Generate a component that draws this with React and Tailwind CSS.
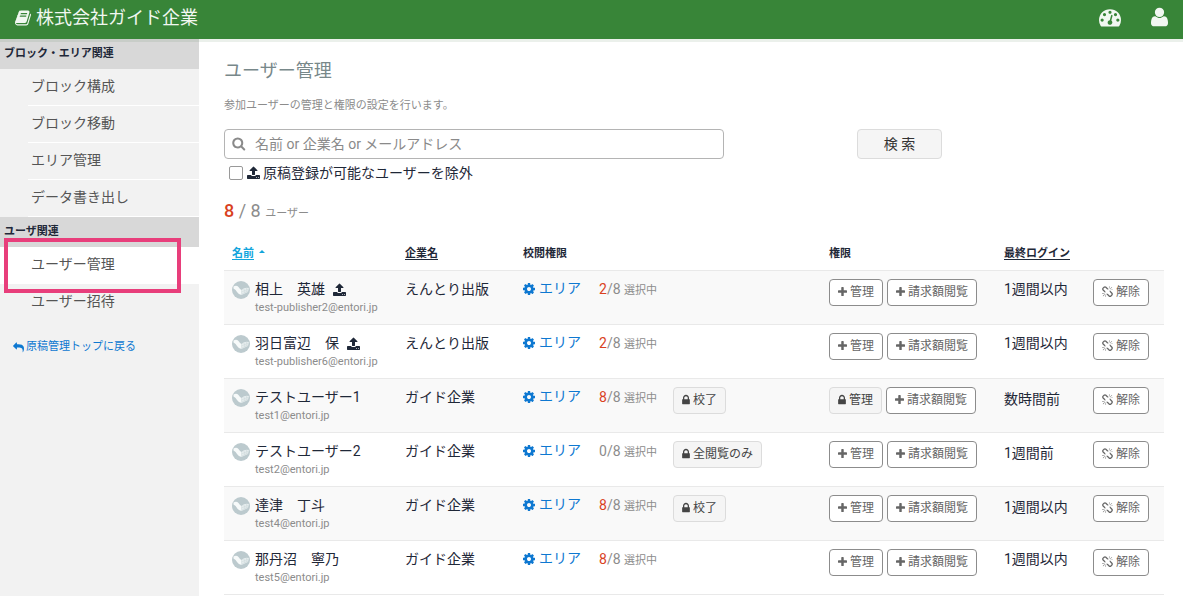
import React from "react";

const ICONS = {
  book: {
    box: "64 0 1664 1792",
    d: "M1703 478q40 57 18 129l-275 906q-19 64-76.5 107.5t-122.5 43.5h-923q-77 0-148.5-53.5t-99.5-131.5q-24-67-2-127 0-4 3-27t4-37q1-8-3-21.5t-3-19.5q2-11 8-21t16.5-23.5 16.5-23.5q23-38 45-91.5t30-91.5q3-10 .5-30t-.5-28q3-11 17-28t17-23q21-36 42-92t25-90q1-9-2.5-32t.5-28q4-13 22-30.5t22-22.5q19-26 42.5-84.5t27.5-96.5q1-8-3-25.5t-2-26.5q2-8 9-18t18-23 17-21q8-12 16.5-30.5t15-35 16-36 19.5-32 26.5-23.5 36-11.5 47.5 5.5l-1 3q38-9 51-9h761q74 0 114 56t18 130l-274 906q-36 119-71.5 153.5t-128.5 34.5h-869q-27 0-38 15-11 16-1 43 24 70 144 70h923q29 0 56-15.5t35-41.5l300-987q7-22 5-57 38 15 59 43zm-1064 2q-4 13 2 22.5t20 9.5h608q13 0 25.5-9.5t16.5-22.5l21-64q4-13-2-22.5t-20-9.5h-608q-13 0-25.5 9.5t-16.5 22.5zm-83 256q-4 13 2 22.5t20 9.5h608q13 0 25.5-9.5t16.5-22.5l21-64q4-13-2-22.5t-20-9.5h-608q-13 0-25.5 9.5t-16.5 22.5z",
  },
  gauge: {
    box: "0 0 1792 1792",
    d: "M384 1152q0-53-37.5-90.5t-90.5-37.5-90.5 37.5-37.5 90.5 37.5 90.5 90.5 37.5 90.5-37.5 37.5-90.5zm192-448q0-53-37.5-90.5t-90.5-37.5-90.5 37.5-37.5 90.5 37.5 90.5 90.5 37.5 90.5-37.5 37.5-90.5zm428 481l101-382q6-26-7.5-48.5t-38.5-29.5-48 6.5-30 39.5l-101 382q-60 5-107 43.5t-63 98.5q-20 77 20 146t117 89 146-20 89-117q16-60-6-117t-72-91zm660-33q0-53-37.5-90.5t-90.5-37.5-90.5 37.5-37.5 90.5 37.5 90.5 90.5 37.5 90.5-37.5 37.5-90.5zm-640-640q0-53-37.5-90.5t-90.5-37.5-90.5 37.5-37.5 90.5 37.5 90.5 90.5 37.5 90.5-37.5 37.5-90.5zm448 192q0-53-37.5-90.5t-90.5-37.5-90.5 37.5-37.5 90.5 37.5 90.5 90.5 37.5 90.5-37.5 37.5-90.5zm320 448q0 261-141 483-19 29-54 29h-1402q-35 0-54-29-141-221-141-483 0-182 71-348t191-286 286-191 348-71 348 71 286 191 191 286 71 348z",
  },
  user: {
    box: "192 0 1408 1792",
    d: "M1600 1405q0 120-73 189.5t-194 69.5h-874q-121 0-194-69.5t-73-189.5q0-53 3.5-103.5t14-109 26.5-108.5 43-97.5 62-81 85.5-53.5 111.5-20q9 0 42 21.5t74.5 48 108 48 133.5 21.5 133.5-21.5 108-48 74.5-48 42-21.5q61 0 111.5 20t85.5 53.5 62 81 43 97.5 26.5 108.5 14 109 3.5 103.5zm-320-893q0 159-112.5 271.5t-271.5 112.5-271.5-112.5-112.5-271.5 112.5-271.5 271.5-112.5 271.5 112.5 112.5 271.5z",
  },
  reply: {
    box: "0 0 1792 1792",
    d: "M1792 1120q0 166-127 451-3 7-10.5 24t-13.5 30-13 22q-12 17-28 17-15 0-23.5-10t-8.5-25q0-9 2.5-26.5t2.5-23.5q5-68 5-123 0-101-17.5-181t-48.5-138.5-80-101-105.5-69.5-133-42.5-154-21.5-175.5-6h-224v256q0 26-19 45t-45 19-45-19l-512-512q-19-19-19-45t19-45l512-512q19-19 45-19t45 19 19 45v256h224q713 0 875 403 53 134 53 333z",
  },
  search: {
    box: "64 64 1728 1792",
    d: "M1216 832q0-185-131.5-316.5t-316.5-131.5-316.5 131.5-131.5 316.5 131.5 316.5 316.5 131.5 316.5-131.5 131.5-316.5zm512 832q0 52-38 90t-90 38q-54 0-90-38l-343-342q-179 124-399 124-143 0-273.5-55.5t-225-150-150-225-55.5-273.5 55.5-273.5 150-225 225-150 273.5-55.5 273.5 55.5 225 150 150 225 55.5 273.5q0 220-124 399l343 343q37 37 37 90z",
  },
  upload: {
    box: "64 0 1664 1792",
    d: "M1344 1472q0-26-19-45t-45-19-45 19-19 45 19 45 45 19 45-19 19-45zm256 0q0-26-19-45t-45-19-45 19-19 45 19 45 45 19 45-19 19-45zm128-224v320q0 40-28 68t-68 28h-1472q-40 0-68-28t-28-68v-320q0-40 28-68t68-28h427q21 56 70.5 92t110.5 36h256q61 0 110.5-36t70.5-92h427q40 0 68 28t28 68zm-325-648q-17 40-59 40h-256v448q0 26-19 45t-45 19h-256q-26 0-45-19t-19-45v-448h-256q-42 0-59-40-17-39 14-69l448-448q18-19 45-19t45 19l448 448q31 30 14 69z",
  },
  cog: {
    box: "128 0 1536 1792",
    d: "M1152 896q0-106-75-181t-181-75-181 75-75 181 75 181 181 75 181-75 75-181zm512-109v222q0 12-8 23t-20 13l-185 28q-19 54-39 91 35 50 107 138 10 12 10 25t-9 23q-27 37-99 108t-94 71q-12 0-26-9l-138-108q-44 23-91 38-16 136-29 186-7 28-36 28h-222q-14 0-24.5-8.5t-11.5-21.5l-28-184q-49-16-90-37l-141 107q-10 9-25 9-14 0-25-11-126-114-165-168-7-10-7-23 0-12 8-23 15-21 51-66.5t54-70.5q-27-50-41-99l-183-27q-13-2-21-12.5t-8-23.5v-222q0-12 8-23t19-13l186-28q14-46 39-92-40-57-107-138-10-12-10-24 0-10 9-23 26-36 98.5-107.5t94.5-71.5q13 0 26 10l138 107q44-23 91-38 16-136 29-186 7-28 36-28h222q14 0 24.5 8.5t11.5 21.5l28 184q49 16 90 37l142-107q9-9 24-9 13 0 25 10 129 119 165 170 7 8 7 22 0 12-8 23-15 21-51 66.5t-54 70.5q26 50 41 98l183 28q13 2 21 12.5t8 23.5z",
  },
  plus: {
    box: "192 0 1408 1792",
    d: "M1600 736v192q0 40-28 68t-68 28h-416v416q0 40-28 68t-68 28h-192q-40 0-68-28t-28-68v-416h-416q-40 0-68-28t-28-68v-192q0-40 28-68t68-28h416v-416q0-40 28-68t68-28h192q40 0 68 28t28 68v416h416q40 0 68 28t28 68z",
  },
  lock: {
    box: "320 0 1152 1792",
    d: "M640 768h512v-192q0-106-75-181t-181-75-181 75-75 181v192zm832 96v576q0 40-28 68t-68 28h-960q-40 0-68-28t-28-68v-576q0-40 28-68t68-28h32v-192q0-184 132-316t316-132 316 132 132 316v192h32q40 0 68 28t28 68z",
  },
  unlink: {
    box: "64 0 1664 1792",
    d: "M503 1271l-256 256q-10 9-23 9-12 0-23-9-9-10-9-23t9-23l256-256q10-9 23-9t23 9q9 10 9 23t-9 23zm169 41v320q0 14-9 23t-23 9-23-9-9-23v-320q0-14 9-23t23-9 23 9 9 23zm-224-224q0 14-9 23t-23 9h-320q-14 0-23-9t-9-23 9-23 23-9h320q14 0 23 9t9 23zm1264 128q0 120-85 203l-147 146q-83 83-203 83-121 0-204-85l-334-335q-21-21-42-56l239-18 273 274q28 28 68 27.5t68-27.5l147-146q28-28 28-67 0-40-28-68l-274-275 18-239q35 21 56 42l336 336q84 86 84 204zm-617-724l-239 18-273-274q-28-28-68-28-39 0-68 27l-147 146q-28 28-28 67 0 40 28 68l274 274-18 240q-35-21-56-42l-336-336q-84-86-84-204 0-120 85-203l147-146q83-83 203-83 121 0 204 85l334 335q21 21 42 56zm633 84q0 14-9 23t-23 9h-320q-14 0-23-9t-9-23 9-23 23-9h320q14 0 23 9t9 23zm-544-544v320q0 14-9 23t-23 9-23-9-9-23v-320q0-14 9-23t23-9 23 9 9 23zm407 151l-256 256q-11 9-23 9t-23-9q-9-10-9-23t9-23l256-256q10-9 23-9t23 9q9 10 9 23t-9 23z",
  },
};

function Icon({ name, className }) {
  return (
    <svg
      viewBox={ICONS[name].box}
      className={`shrink-0 fill-current ${className}`}
      aria-hidden="true"
    >
      <path d={ICONS[name].d} />
    </svg>
  );
}

function Avatar() {
  return (
    <svg viewBox="0 0 36 36" className="mt-px size-[18px] shrink-0" aria-hidden="true">
      <circle cx="18" cy="18" r="18" fill="#bccace" />
      <path d="M3 11 Q9 8 13 12 Q16 17 19 18 L19 28 Q13 27 10 22 Q8 17 3 15 Z" fill="#f7fafa" />
      <path d="M19 18 Q25 12 34 14 L32 22 L19 28 Z" fill="#e6edee" />
      <path d="M19 22 L33 16 M20 26 L32 20 M24 16 L26 24 M29 14 L30 22" stroke="#c6d2d5" strokeWidth="0.8" fill="none" />
    </svg>
  );
}

function OutlineButton({ icon, iconClass, children }) {
  return (
    <button
      type="button"
      className="flex h-[27px] items-center gap-[3px] rounded-[4px] border border-[#8c8c8c] bg-white px-2 text-[12px] whitespace-nowrap text-[#666]"
    >
      <Icon name={icon} className={`h-3 ${iconClass}`} />
      {children}
    </button>
  );
}

function LockedButton({ children }) {
  return (
    <button
      type="button"
      className="flex h-[27px] items-center gap-[3px] rounded-[4px] border border-[#dcdcdc] bg-[#f5f5f5] px-2 text-[12px] whitespace-nowrap text-[#444]"
    >
      <Icon name="lock" className="h-3 w-2" />
      {children}
    </button>
  );
}

function SideHeading({ children }) {
  return (
    <h2 className="flex h-[30px] items-center bg-[#d8d8d8] pl-1 text-[11px] font-bold text-[#1f2838]">
      {children}
    </h2>
  );
}

function SideItem({ active, last, children }) {
  return (
    <li className={active ? "relative bg-white" : ""}>
      <a
        href="#"
        className={`ml-7 flex h-[37px] items-center border-b pb-px pl-[3px] text-[14px] text-[#555] ${last ? "border-transparent" : "border-white"}`}
      >
        {children}
      </a>
      {active && (
        <span className="pointer-events-none absolute -top-[9px] left-1 h-[55px] w-[177px] border-4 border-[#e83e7b]" />
      )}
    </li>
  );
}

const USERS = [
  { name: "相上　英雄", upload: true, mail: "test-publisher2@entori.jp", company: "えんとり出版", count: 2, login: "1週間以内" },
  { name: "羽日富辺　保", upload: true, mail: "test-publisher6@entori.jp", company: "えんとり出版", count: 2, login: "1週間以内" },
  { name: "テストユーザー1", mail: "test1@entori.jp", company: "ガイド企業", count: 8, review: "校了", admin: true, login: "数時間前" },
  { name: "テストユーザー2", mail: "test2@entori.jp", company: "ガイド企業", count: 0, review: "全閲覧のみ", login: "1週間前" },
  { name: "達津　丁斗", mail: "test4@entori.jp", company: "ガイド企業", count: 8, review: "校了", login: "1週間以内" },
  { name: "那丹沼　寧乃", mail: "test5@entori.jp", company: "ガイド企業", count: 8, login: "1週間以内" },
];

function UserRow({ user }) {
  return (
    <tr className="h-[54px] border-t border-[#e9e9e9] align-top last:border-b odd:bg-[#f9f9f9]">
      <td className="px-2 pt-[9px]">
        <div className="flex gap-[5px]">
          <Avatar />
          <div>
            <div className="flex h-5 items-center gap-2 whitespace-nowrap">
              {user.name}
              {user.upload && <Icon name="upload" className="h-[14px] w-[13px]" />}
            </div>
            <div className="text-[11px] leading-4 text-[#8c8c8c]">{user.mail}</div>
          </div>
        </div>
      </td>
      <td className="px-2 pt-2 leading-5">{user.company}</td>
      <td className="px-2 pt-2">
        <div className="flex">
          <div className="w-[76px]">
            <a href="#" className="flex h-5 items-center gap-1 text-[#0e78d1]">
              <Icon name="cog" className="h-[14px] w-3" />
              エリア
            </a>
          </div>
          <div className="w-[74px] leading-5 whitespace-nowrap text-[#8c8c8c]">
            <span className={user.count ? "text-[#d9411e]" : ""}>{user.count}</span>/8{" "}
            <span className="text-[11px]">選択中</span>
          </div>
          {user.review && <LockedButton>{user.review}</LockedButton>}
        </div>
      </td>
      <td className="px-2 pt-2">
        <div className="flex gap-1">
          {user.admin ? (
            <LockedButton>管理</LockedButton>
          ) : (
            <OutlineButton icon="plus" iconClass="w-[9px]">管理</OutlineButton>
          )}
          <OutlineButton icon="plus" iconClass="w-[9px]">請求額閲覧</OutlineButton>
        </div>
      </td>
      <td className={`px-2 leading-5 whitespace-nowrap ${user.review ? "pt-[10px]" : "pt-2"}`}>{user.login}</td>
      <td className="px-2 pt-2">
        <OutlineButton icon="unlink" iconClass="w-[11px]">解除</OutlineButton>
      </td>
    </tr>
  );
}

export default function App() {
  return (
    <div className="flex min-h-screen flex-col bg-white font-[Roboto,'Noto_Sans_CJK_JP',sans-serif] text-[14px] text-[#1f2838]">
      <header className="relative z-10 flex h-[39px] items-center justify-between bg-[#388538] pr-[15px] pb-[3px] pl-[15px] text-[#f1f7f1] shadow-[0_3px_0_rgba(56,110,56,0.1)]">
        <a href="#" className="flex items-center gap-[5px] text-[18px] leading-6">
          <Icon name="book" className="h-[18px] w-4" />
          株式会社ガイド企業
        </a>
        <nav className="flex items-center gap-[30px] pb-[2px]">
          <a href="#" aria-label="ダッシュボード">
            <Icon name="gauge" className="size-[22px]" />
          </a>
          <a href="#" aria-label="アカウント">
            <Icon name="user" className="h-[22px] w-[17px]" />
          </a>
        </nav>
      </header>

      <div className="flex flex-1">
        <aside className="w-[199px] shrink-0 bg-[#f2f2f2]">
          <SideHeading>ブロック・エリア関連</SideHeading>
          <ul>
            <SideItem>ブロック構成</SideItem>
            <SideItem>ブロック移動</SideItem>
            <SideItem>エリア管理</SideItem>
            <SideItem>データ書き出し</SideItem>
          </ul>
          <SideHeading>ユーザ関連</SideHeading>
          <ul>
            <SideItem active>ユーザー管理</SideItem>
            <SideItem last>ユーザー招待</SideItem>
          </ul>
          <a href="#" className="mt-[18px] ml-[13px] flex items-center gap-[2px] text-[11px] leading-4 text-[#0e78d1]">
            <Icon name="reply" className="size-[11px]" />
            原稿管理トップに戻る
          </a>
        </aside>

        <main className="min-w-0 flex-1 pt-5 pr-[19px] pl-[25px]">
          <h1 className="text-[18px] leading-6 text-[#78888a]">ユーザー管理</h1>
          <p className="mt-[15px] text-[11px] leading-4 text-[#8c8c8c]">参加ユーザーの管理と権限の設定を行います。</p>

          <form className="mt-[15px]" onSubmit={(e) => e.preventDefault()}>
            <div className="flex">
              <div className="w-[633px]">
                <label className="flex h-[30px] max-w-[500px] items-center gap-[9px] rounded-[4px] border border-[#b4b4b4] bg-white px-[7px] text-[#8a8a8a]">
                  <Icon name="search" className="size-[14px]" />
                  <input
                    type="text"
                    aria-label="ユーザー検索"
                    placeholder="名前 or 企業名 or メールアドレス"
                    className="min-w-0 flex-1 bg-transparent outline-none placeholder:text-[#8a8a8a]"
                  />
                </label>
              </div>
              <button
                type="submit"
                className="h-[30px] w-[85px] rounded-[4px] border border-[#dcdcdc] bg-[#f5f5f5] text-[14px] text-[#333]"
              >
                検 索
              </button>
            </div>
            <label className="mt-1 ml-[5px] flex h-5 items-center">
              <input type="checkbox" className="size-[14px] appearance-none rounded-[2px] border border-[#999] bg-white checked:bg-[#0e78d1]" />
              <Icon name="upload" className="mr-[3px] ml-1 h-[14px] w-[13px]" />
              原稿登録が可能なユーザーを除外
            </label>
          </form>

          <p className="mt-4 text-[18px] leading-6 text-[#8c8c8c]">
            <span className="font-medium text-[#d9411e]">8</span> / 8 <span className="text-[11px]">ユーザー</span>
          </p>

          <table className="mt-[8px] w-full table-fixed border-collapse text-left">
            <colgroup>
              <col className="w-[173px]" />
              <col className="w-[118px]" />
              <col />
              <col className="w-[175px]" />
              <col className="w-[89px]" />
              <col className="w-[79px]" />
            </colgroup>
            <thead>
              <tr className="h-9 text-[11px]">
                <th className="px-2 pt-1">
                  <a href="#" className="flex items-center gap-[5px] text-[#12a5dc]">
                    <span className="underline underline-offset-2">名前</span>
                    <svg viewBox="0 0 6 3" className="mb-1 h-[3px] w-[6px] fill-current" aria-hidden="true">
                      <path d="M0 3L3 0L6 3Z" />
                    </svg>
                  </a>
                </th>
                <th className="px-2 pt-1">
                  <a href="#" className="underline underline-offset-2">企業名</a>
                </th>
                <th className="px-2 pt-1">校閲権限</th>
                <th className="px-2 pt-1">権限</th>
                <th className="px-2 pt-1 whitespace-nowrap">
                  <a href="#" className="underline underline-offset-2">最終ログイン</a>
                </th>
                <th className="px-2 pt-1" aria-label="操作" />
              </tr>
            </thead>
            <tbody>
              {USERS.map((user) => (
                <UserRow key={user.mail} user={user} />
              ))}
            </tbody>
          </table>
        </main>
      </div>
    </div>
  );
}
